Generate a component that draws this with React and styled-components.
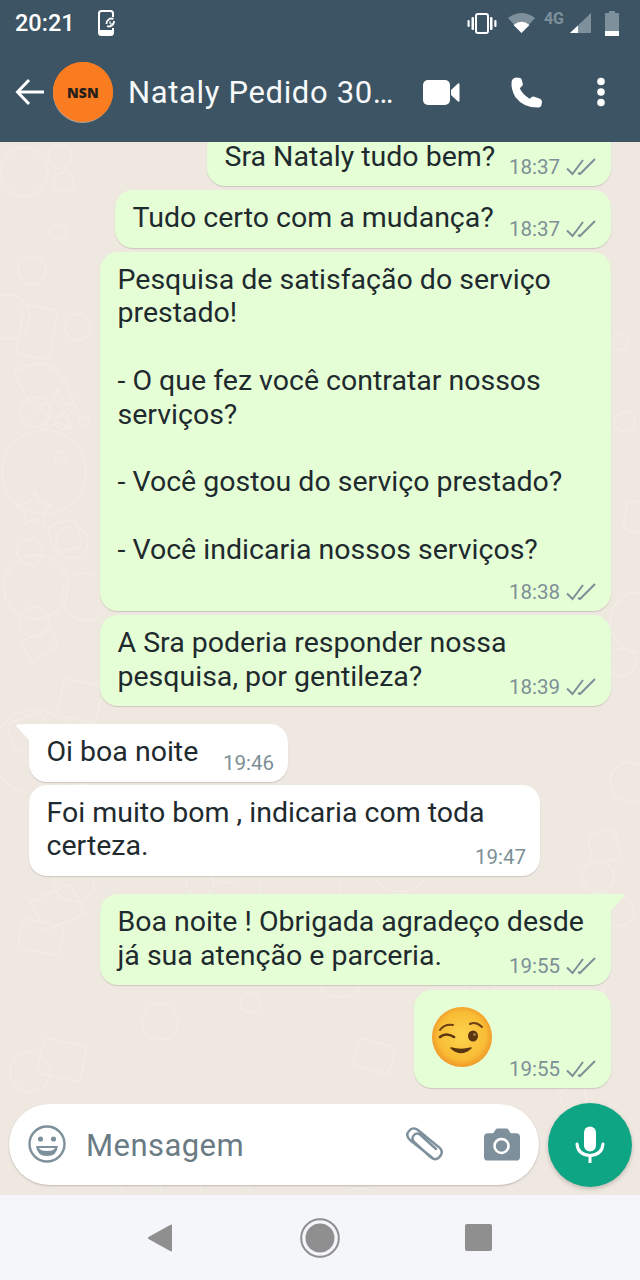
import React from "react";
import styled, { createGlobalStyle } from "styled-components";

const Global = createGlobalStyle`
  html, body { margin: 0; padding: 0; background: #efe8e1; }
  * { box-sizing: border-box; }
`;

const Screen = styled.div`
  width: 640px; height: 1280px; display: flex; flex-direction: column; overflow: hidden;
  font-family: Roboto, "Liberation Sans", sans-serif;
`;
const Top = styled.header`
  background: #3c5464; height: 142px; display: flex; flex-direction: column; flex: none; color: #fff;
`;
const StatusBar = styled.div`
  height: 46px; display: flex; align-items: center; padding: 0 21px 0 15px;
`;
const Clock = styled.span`
  font-size: 23.5px; font-weight: 500; width: 83px; margin-top: -1px;
`;
const StatusRight = styled.div`
  margin-left: auto; display: flex; align-items: center;
`;
const NetLabel = styled.span`
  font-size: 16px; font-weight: 700; color: #7d909b; margin: -8px 6px 0 9px; line-height: 20px;
`;
const StatusSvg = styled.svg`
  display: block; flex: none; margin-left: ${p => p.$ml || 0}px;
`;
const Toolbar = styled.div`
  flex: 1; display: flex; align-items: center; padding: 0 0 4px 15px;
`;
const AvatarWrap = styled.div`
  position: relative; width: 60px; height: 60px; border-radius: 50%; background: #f97c21;
  margin-left: 8px; display: flex; align-items: center; justify-content: center; flex: none;
  font-family: "Open Sans", sans-serif; font-weight: 800; font-size: 14px; color: #26201c;
  &::before {
    content: ""; position: absolute; z-index: 0; left: 0; top: 2px; width: 59px; height: 59px; border-radius: 50%;
    background: #a9a49e;
  }
  &::after {
    content: ""; position: absolute; inset: 0; border-radius: 50%; background: #f97c21;
  }
`;
const AvatarText = styled.span`
  position: relative; z-index: 1; letter-spacing: 0.2px;
`;
const Title = styled.div`
  font-size: 31px; font-weight: 400; margin-left: 15px; width: 295px; white-space: nowrap; letter-spacing: 0.65px; color: #f7f9fa;
`;
const Chat = styled.main`
  position: relative; flex: 1; min-height: 0; background: #efe8e1; display: flex; flex-direction: column;
  justify-content: flex-end; overflow: hidden; padding: 0 8px 9px 9px;
`;
const Wall = styled.svg`
  position: absolute; left: 0; top: 0; width: 640px; height: 1053px; pointer-events: none;
`;
const Messages = styled.div`
  position: relative; display: flex; flex-direction: column; padding: 0 21px 0 20px; margin-bottom: 14px;
`;
const Bubble = styled.div`
  position: relative; width: ${p => p.$w}px; align-self: ${p => p.$out ? "flex-end" : "flex-start"};
  margin-top: ${p => p.$mt}px; padding: 11px ${p => p.$out ? 15 : 14}px 7px 18px;
  background: ${p => p.$out ? "#e5fed6" : "#ffffff"}; border-radius: 18px;
  box-shadow: 0 1px 1px rgba(110, 100, 90, 0.25);
  display: flex; flex-direction: ${p => p.$stacked ? "column" : "row"}; align-items: flex-end; justify-content: space-between;
  ${p => p.$tail ? `border-${p.$out ? "top-right" : "top-left"}-radius: 0;` : ""}
  ${p => p.$tail ? `&::before {
    content: ""; position: absolute; top: 0; ${p.$out ? "right: -14px" : "left: -13px"}; width: 15px; height: 18px;
    background: ${p.$out ? "#e5fed6" : "#ffffff"};
    clip-path: polygon(${p.$out ? "0 0, 92% 0, 100% 8%, 0 100%" : "8% 0, 100% 0, 100% 100%, 0 8%"});
  }` : ""}
`;
const Body = styled.div`
  font-size: 28.5px; line-height: 33.8px; color: #1e2a2e; white-space: pre; margin-left: -0.5px;
  margin-bottom: ${p => p.$stacked ? 13.2 : 5.6}px; flex: ${p => p.$stacked ? "none" : "1"}; min-width: 0;
  align-self: ${p => p.$stacked ? "flex-start" : "auto"};
`;
const Meta = styled.div`
  display: flex; align-items: center; height: 24px; flex: none; font-size: 20.5px; color: #7d8f96; gap: 6px;
`;
const EmojiArt = styled.svg`
  display: block; margin: 6px 0 14px; flex: none;
`;
const Composer = styled.div`
  position: relative; display: flex; align-items: center; gap: 9px; flex: none;
`;
const Input = styled.div`
  width: 531px; height: 81px; border-radius: 41px; background: #fff; display: flex; align-items: center;
  padding: 0 19px 0 19px; box-shadow: 0 1px 2px rgba(110, 100, 90, 0.35);
`;
const Placeholder = styled.span`
  font-size: 31px; color: #6a7b84; margin-left: 20px; margin-right: auto; letter-spacing: 0.45px; position: relative; top: 1px;
`;
const MicButton = styled.div`
  width: 84px; height: 84px; border-radius: 50%; background: #0ea585; display: flex; align-items: center; justify-content: center;
  box-shadow: 0 2px 4px rgba(90, 80, 70, 0.3); flex: none; margin: 1px 0 -1px;
`;
const NavBar = styled.nav`
  flex: none; height: 85px; background: #f4f6f9; display: grid; grid-template-columns: repeat(3, 160px); padding: 0 80px;
  align-items: center; justify-items: center;
`;
const NavSquare = styled.div`
  width: 27px; height: 27px; background: #8f8f90; border-radius: 2px; margin-left: -4px;
`;

const Checks = () => (
  <svg width="30" height="18" viewBox="0 0 30 18" fill="none" stroke="#7d8f96" strokeWidth="2">
    <path d="M1 10.5 L6.5 16 L17 2" />
    <path d="M12 15 L14 16 L29 1" />
  </svg>
);

const Doodles = () => {
  const rings = [[24,30,24],[60,15,12],[64,40,10],[35,270,15],[62,280,7],[84,280,5],[60,315,5],[32,128,14],[58,90,8],[8,175,22],[78,185,13],[44,330,42],[30,410,13],[35,610,42],[36,445,32],[72,400,16],[86,455,24],[34,480,15],[82,660,18],[74,740,20],[620,200,8],[625,280,10],[622,520,14],[630,640,20],[620,770,14],[300,745,40],[340,830,25],[580,840,25],[360,1070,24],[640,480,30],[30,930,20],[74,1000,24],[300,1070,14],[250,860,10],[200,740,14],[160,880,18],[90,1080,10],[598,735,16],[430,800,14],[400,720,30],[480,850,15],[560,880,12]];
  const boxes = [[50,380,30,28,-15],[20,165,34,50,10],[60,540,40,38,14],[10,575,38,30,-20],[40,900,44,36,12],[120,1030,40,30,-8],[300,790,30,30,20],[460,760,36,26,-10],[200,1040,50,30,8],[590,690,28,30,-12],[355,900,38,28,15],[560,945,26,20,-15],[625,360,24,30,8],[20,780,42,30,10],[210,720,26,20,8],[70,1060,28,28,-14]];
  return (
    <Wall viewBox="0 0 640 1053" fill="none" stroke="#f2ece5" strokeWidth="1.6">
      {rings.map(([x, y, r], i) => <circle key={i} cx={x} cy={y} r={r} />)}
      {boxes.map(([x, y, w, h, a], i) => (
        <rect key={i} x={x} y={y} width={w} height={h} rx="6" transform={`rotate(${a} ${x + w / 2} ${y + h / 2})`} />
      ))}
      <path d="M58 248 l6 13 14 2 -10 10 3 14 -13 -7 -12 7 3 -14 -10 -10 14 -2z" />
      <path d="M35 460 l5 11 12 2 -9 8 2 12 -10 -6 -11 6 2 -12 -9 -8 12 -2z" transform="translate(0 -110)" />
      <path d="M14 230 q40 -26 60 30 q-30 40 -60 -30z" />
      <path d="M30 760 l40 -18 16 30 -40 16z M20 500 l30 -14 8 18 -26 16z" />
    </Wall>
  );
};

const Wink = () => (
  <EmojiArt width="60" height="60" viewBox="0 0 60 60">
    <defs>
      <radialGradient id="face" cx="50%" cy="48%" r="55%">
        <stop offset="0%" stopColor="#fdd44e" />
        <stop offset="72%" stopColor="#f9bc35" />
        <stop offset="100%" stopColor="#ee8f26" />
      </radialGradient>
    </defs>
    <circle cx="30" cy="30" r="30" fill="url(#face)" />
    <path d="M38 17 Q44 14 50 20" fill="none" stroke="#6b4016" strokeWidth="2" strokeLinecap="round" />
    <path d="M8 23 Q12 17 21 18" fill="none" stroke="#6b4016" strokeWidth="2" strokeLinecap="round" />
    <path d="M8 30 Q14 25 22 30" fill="none" stroke="#5a3512" strokeWidth="2.6" strokeLinecap="round" />
    <ellipse cx="41" cy="29" rx="5" ry="5.5" fill="#5a3512" />
    <circle cx="42.5" cy="27.5" r="1.5" fill="#a77b45" />
    <path d="M19 41 Q29 50 39 41 Q29 44 19 41Z" fill="#5a3512" stroke="#5a3512" strokeWidth="1.6" strokeLinejoin="round" />
  </EmojiArt>
);

const messages = [
  { out: true, w: 404, mt: 0, text: "Sra Nataly tudo bem?", time: "18:37" },
  { out: true, w: 496, mt: 4, text: "Tudo certo com a mudança?", time: "18:37" },
  { out: true, w: 511, mt: 4, stacked: true, text: "Pesquisa de satisfação do serviço\nprestado!\n\n- O que fez você contratar nossos\nserviços?\n\n- Você gostou do serviço prestado?\n\n- Você indicaria nossos serviços?", time: "18:38" },
  { out: true, w: 511, mt: 4, text: "A Sra poderia responder nossa\npesquisa, por gentileza?", time: "18:39" },
  { out: false, w: 259, mt: 18, tail: true, text: "Oi boa noite", time: "19:46" },
  { out: false, w: 511, mt: 3, text: "Foi muito bom , indicaria com toda\ncerteza.", time: "19:47" },
  { out: true, w: 511, mt: 18, tail: true, text: "Boa noite ! Obrigada agradeço desde\njá sua atenção e parceria.", time: "19:55" },
  { out: true, w: 197, mt: 5, emoji: true, time: "19:55" },
];

export default function App() {
  return (
    <Screen>
      <Global />
      <Top>
        <StatusBar>
          <Clock>20:21</Clock>
          <svg width="19" height="26" viewBox="0 0 19 26" fill="none">
            <rect x="1" y="1" width="14" height="24" rx="2.5" stroke="#fff" strokeWidth="2" />
            <rect x="2" y="20" width="12" height="4" fill="#fff" />
            <rect x="7" y="7" width="11" height="11" fill="#3c5464" />
            <path d="M15.5 9 A5 5 0 0 0 8.5 14 M9 16 A5 5 0 0 0 16 11" stroke="#fff" strokeWidth="1.8" />
            <path d="M12 11 v3 h3" stroke="#fff" strokeWidth="1" />
          </svg>
          <StatusRight>
            <StatusSvg width="30" height="24" viewBox="0 0 30 24" fill="none">
              <rect x="9" y="3" width="12" height="19" rx="2" stroke="#fff" strokeWidth="2" />
              <rect x="4.5" y="6" width="2.5" height="13" rx="1" fill="#fff" />
              <rect x="23" y="6" width="2.5" height="13" rx="1" fill="#fff" />
              <rect x="0.5" y="9" width="2.2" height="7" rx="1" fill="#fff" />
              <rect x="27.3" y="9" width="2.2" height="7" rx="1" fill="#fff" />
            </StatusSvg>
            <StatusSvg $ml={11} width="27" height="22" viewBox="0 0 27 22">
              <path d="M0 6 Q13.5 -4 27 6 L13.5 21Z" fill="#7d909b" />
              <path d="M5.5 13 Q13.5 6.5 21.5 13 L13.5 21Z" fill="#fff" />
            </StatusSvg>
            <NetLabel>4G</NetLabel>
            <StatusSvg width="21" height="22" viewBox="0 0 21 22">
              <path d="M0 21 L21 1 V21Z" fill="#7d909b" />
              <path d="M0 21 L8 13.4 V21Z" fill="#fff" />
            </StatusSvg>
            <StatusSvg $ml={14} width="14" height="25" viewBox="0 0 14 25">
              <path d="M4 0 H10 V2 H13 Q14 2 14 3 V25 H0 V3 Q0 2 1 2 H4Z" fill="#7d909b" />
              <rect y="20" width="14" height="5" fill="#fff" />
            </StatusSvg>
          </StatusRight>
        </StatusBar>
        <Toolbar>
          <svg width="30" height="28" viewBox="0 0 30 28" fill="none" stroke="#fff" strokeWidth="3">
            <path d="M29 14 H3" />
            <path d="M14 2 L2.5 14 L14 26" />
          </svg>
          <AvatarWrap><AvatarText>NSN</AvatarText></AvatarWrap>
          <Title>Nataly Pedido 30…</Title>
          <svg width="37" height="25" viewBox="0 0 37 25">
            <rect x="0" y="0" width="27" height="25" rx="5" fill="#fff" />
            <path d="M28 10 L35 3.5 Q36.5 2.5 36.5 4.5 V20.5 Q36.5 22.5 35 21.5 L28 15Z" fill="#fff" />
          </svg>
          <svg style={{ marginLeft: 51 }} width="31" height="31" viewBox="0 0 30 30">
            <path d="M5 0.5 L9 1 Q10 1.5 10.5 3 L11.5 7 Q11.5 8.5 9.5 10 L8.5 11 Q11 17 18 21 L20 19.5 Q21 18.5 22.5 19 L28 21 Q30 22 30 24 L29.5 27 Q29 29 27 29.5 Q12 30 4 19 Q0 12 0.5 5 Q1 1 5 0.5Z" fill="#fff" />
          </svg>
          <svg style={{ marginLeft: 53 }} width="12" height="30" viewBox="0 0 12 30">
            <circle cx="6" cy="4.5" r="3.8" fill="#fff" />
            <circle cx="6" cy="15" r="3.8" fill="#fff" />
            <circle cx="6" cy="25.5" r="3.8" fill="#fff" />
          </svg>
        </Toolbar>
      </Top>
      <Chat>
        <Doodles />
        <Messages>
          {messages.map((m, i) => (
            <Bubble key={i} $out={m.out} $w={m.w} $mt={m.mt} $stacked={m.stacked} $tail={m.tail}>
              {m.emoji ? <Wink /> : <Body $stacked={m.stacked}>{m.text}</Body>}
              <Meta>{m.time}{m.out && <Checks />}</Meta>
            </Bubble>
          ))}
        </Messages>
        <Composer>
          <Input>
            <svg width="38" height="38" viewBox="0 0 38 38" fill="none">
              <circle cx="19" cy="19" r="17.5" stroke="#7d909b" strokeWidth="2.4" />
              <circle cx="12.5" cy="14" r="2.6" fill="#7d909b" />
              <circle cx="25.5" cy="14" r="2.6" fill="#7d909b" />
              <path d="M8 21 H30 Q29 31 19 31 Q9 31 8 21Z" fill="#7d909b" />
              <path d="M11 23 H27 Q26 26 19 26 Q12 26 11 23Z" fill="#fff" />
            </svg>
            <Placeholder>Mensagem</Placeholder>
            <svg width="38" height="34" viewBox="0 0 38 34" fill="none" stroke="#7d909b" strokeWidth="2.4" strokeLinecap="round">
              <path d="M27 30.5 L5 13 Q0 8 4 4 Q8 -1 13.5 3.5 L35 21 Q39 26 34 30.5 Q30 34 25.5 30 L9 15 Q6 11 9 8 Q12 5 15.5 8 L31 22" />
            </svg>
            <svg style={{ marginLeft: 41 }} width="36" height="33" viewBox="0 0 37 33">
              <path d="M4 5 H9.5 L12 1 Q12.5 0 14 0 H23 Q24.5 0 25 1 L27.5 5 H33 Q37 5 37 9 V29 Q37 33 33 33 H4 Q0 33 0 29 V9 Q0 5 4 5Z" fill="#7d909b" />
              <circle cx="18" cy="18" r="7.2" fill="none" stroke="#fff" strokeWidth="2.6" />
            </svg>
          </Input>
          <MicButton>
            <svg width="30" height="38" viewBox="0 0 30 38" fill="none">
              <rect x="9" y="0.5" width="12" height="25" rx="6" fill="#fff" />
              <path d="M2 18 Q3 29 15 29.5 Q27 29 28 18" stroke="#fff" strokeWidth="3" strokeLinecap="round" />
              <path d="M15 29 V37" stroke="#fff" strokeWidth="3" />
            </svg>
          </MicButton>
        </Composer>
      </Chat>
      <NavBar>
        <svg width="26" height="30" viewBox="0 0 26 30">
          <path d="M24 1.5 Q25 1 25 3 V27 Q25 29 24 28.5 L1.5 16 Q0 15 1.5 14Z" fill="#8f8f90" />
        </svg>
        <svg width="40" height="40" viewBox="0 0 40 40" fill="none">
          <circle cx="20" cy="20" r="18.8" stroke="#8f8f90" strokeWidth="2" />
          <circle cx="20" cy="20" r="14.5" fill="#8f8f90" />
        </svg>
        <NavSquare />
      </NavBar>
    </Screen>
  );
}
